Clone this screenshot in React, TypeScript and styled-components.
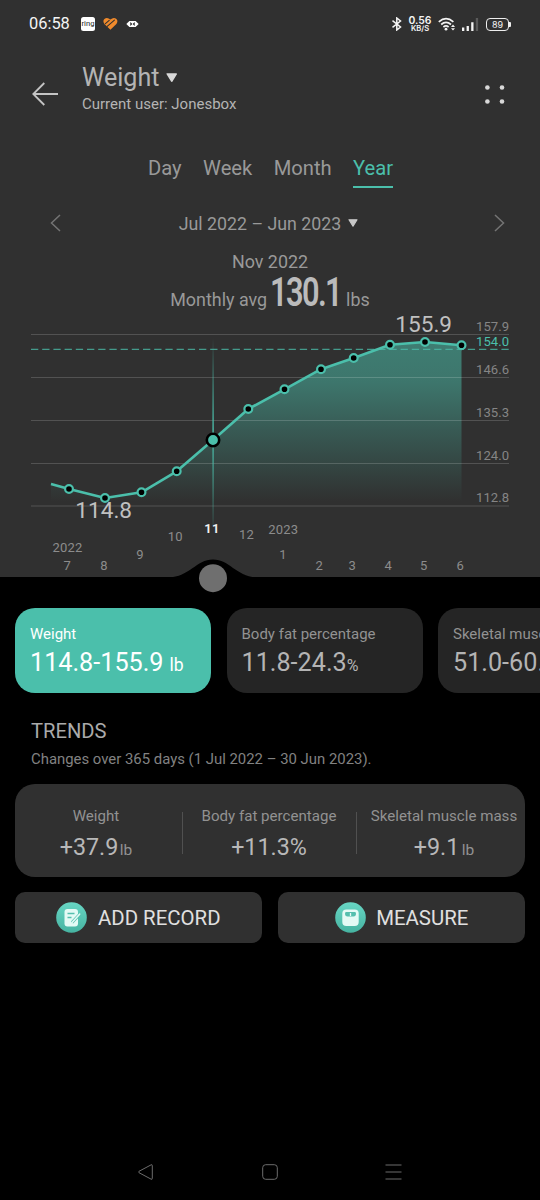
import React from 'react';
import styled, { createGlobalStyle } from 'styled-components';

const teal = '#4bbfab';
const panel = '#303030';

const GlobalStyle = createGlobalStyle`
  * { box-sizing: border-box; }
  html, body { margin: 0; background: #000; }
  body { font-family: Roboto, "Liberation Sans", sans-serif; color: #a9a9a9; }
`;

const Screen = styled.div`
  width: 540px;
  height: 1200px;
  overflow: hidden;
  display: flex;
  flex-direction: column;
  background: #000;
`;

const TopPanel = styled.section`
  height: 577px;
  flex: none;
  display: flex;
  flex-direction: column;
  background: ${panel};
`;

const StatusBar = styled.header`
  height: 48px;
  padding: 0 29px 0 29px;
  display: flex;
  align-items: center;
  justify-content: space-between;
  color: #f4f4f4;
`;

const StatusGroup = styled.div`
  display: flex;
  align-items: center;
`;

const Clock = styled.span`
  width: 52px;
  font: 400 16.4px/20px Roboto, sans-serif;
`;

const RingBadge = styled.span`
  width: 14px;
  height: 14px;
  margin-right: 8px;
  border-radius: 2.5px;
  background: #fff;
  color: #222;
  display: flex;
  justify-content: center;
  font: 400 7.6px/14px Roboto, sans-serif;
`;

const HexMark = styled.svg`
  margin-left: 8px;
`;

const Signal = styled.svg`
  margin: 0 7px 0 5px;
`;

const NetSpeed = styled.div`
  width: 24px;
  margin: 0 6px 0 5px;
  text-align: center;
  font: 600 10.4px/9px Inter, sans-serif;
`;

const NetUnit = styled.div`
  font-size: 7.6px;
  line-height: 8px;
`;

const Battery = styled.span`
  width: 23px;
  height: 13px;
  border: 1.4px solid #eee;
  border-radius: 4px;
  display: flex;
  justify-content: center;
  font: 400 9px/11.4px Inter, sans-serif;
`;

const BatteryTip = styled.span`
  width: 2px;
  height: 5px;
  background: #eee;
  border-radius: 0 1px 1px 0;
`;

const Header = styled.div`
  height: 92px;
  padding: 14px 35px 0 32px;
  display: flex;
`;

const HeaderIcon = styled.div`
  padding-top: 20px;
`;

const Titles = styled.div`
  flex: 1;
  margin-left: 24px;
`;

const Title = styled.h1`
  margin: 0;
  padding-top: 1px;
  display: flex;
  align-items: center;
  gap: 6.5px;
  font-weight: 400;
  font-size: 25.1px;
  line-height: 30px;
  color: #b4b4b4;
`;

const Subtitle = styled.div`
  font-size: 15px;
  line-height: 23px;
  color: #b4b4b4;
`;

const Tabs = styled.nav`
  height: 50px;
  padding-left: 148px;
  display: flex;
  align-items: flex-start;
  gap: 21.4px;
`;

const Tab = styled.span<{ $active?: boolean }>`
  height: 48px;
  padding-top: 14px;
  font-size: 20.2px;
  line-height: 28px;
  color: ${(p) => (p.$active ? teal : '#999')};
  border-bottom: 2px solid ${(p) => (p.$active ? teal : 'transparent')};
`;

const PeriodRow = styled.div`
  height: 66px;
  padding: 0 35px 0 50px;
  display: flex;
  align-items: center;
  justify-content: space-between;
`;

const Period = styled.div`
  margin-right: 18px;
  display: flex;
  align-items: center;
  gap: 7px;
  font-size: 17.8px;
  color: #999;
`;

const Selected = styled.div`
  height: 60px;
  display: flex;
  flex-direction: column;
  align-items: center;
  font-size: 17.9px;
  line-height: 22px;
  color: #999;
  margin-top: -5px;
`;

const Average = styled.div`
  display: flex;
  align-items: baseline;
  height: 38px;
  line-height: 39px;
`;

const BigNumber = styled.strong`
  width: 71px;
  margin: 0 5px 0 3px;
  font-size: 40.5px;
  font-weight: 600;
  letter-spacing: -2.1px;
  color: #bbb;
  white-space: nowrap;
  transform: scaleX(0.76);
  transform-origin: 0 50%;
`;

const Chart = styled.svg`
  display: block;
  flex: none;
  margin-top: auto;
  overflow: visible;
`;

const Metrics = styled.div`
  padding: 31px 0 0 15px;
  display: flex;
  gap: 15.5px;
`;

const Metric = styled.article<{ $active?: boolean }>`
  flex: 0 0 196px;
  height: 85px;
  padding: 15px 15px 0;
  border-radius: 20px;
  white-space: nowrap;
  background: ${(p) => (p.$active ? teal : '#252525')};
  color: ${(p) => (p.$active ? '#fff' : '#b4b4b4')};
`;

const MetricLabel = styled.div<{ $active?: boolean }>`
  font-size: 15px;
  line-height: 22px;
  color: ${(p) => (p.$active ? '#fff' : '#929292')};
`;

const MetricValue = styled.div`
  font-size: 25.2px;
  line-height: 36px;
`;

const Unit = styled.small<{ $size: number; $gap: number }>`
  font-size: ${(p) => p.$size}px;
  margin-left: ${(p) => p.$gap}px;
`;

const TrendsHead = styled.div`
  padding: 25px 31px 0;
  height: 91px;
`;

const TrendsTitle = styled.h2`
  margin: 0;
  font-weight: 400;
  font-size: 20.2px;
  line-height: 26px;
  color: #aaa;
`;

const TrendsNote = styled.div`
  font-size: 14.9px;
  line-height: 30px;
  color: #828282;
`;

const TrendCard = styled.div`
  height: 93px;
  margin: 0 15px;
  padding: 19px 0;
  display: grid;
  grid-template-columns: 167px 174px 1fr;
  border-radius: 20px;
  background: ${panel};
`;

const TrendCell = styled.div`
  display: flex;
  justify-content: center;
  height: 62px;
  & + & {
    background: linear-gradient(#505050, #505050) 0 9px / 1px 42px no-repeat;
  }
  &:first-child { padding-right: 5px; }
  &:last-child { padding-left: 7px; }
`;

const Trend = styled.div`
  text-align: center;
  white-space: nowrap;
`;

const TrendLabel = styled.div`
  font-size: 15.1px;
  line-height: 26px;
  color: #929292;
`;

const TrendValue = styled.div`
  font-size: 23.3px;
  line-height: 36px;
  color: #b8b8b8;
  small { color: #929292; }
`;

const Actions = styled.div`
  padding: 15px 15px 0;
  display: grid;
  grid-template-columns: 247px 247px;
  justify-content: space-between;
`;

const Action = styled.button`
  height: 51px;
  padding: 0;
  border: 0;
  border-radius: 10px;
  display: flex;
  align-items: center;
  justify-content: center;
  gap: 10.5px;
  background: ${panel};
  color: #e0e0e0;
  font: 400 20.4px/26px Roboto, sans-serif;
`;

const NavBar = styled.footer`
  margin-top: auto;
  height: 56px;
  padding: 0 138px 0 137px;
  display: flex;
  align-items: center;
  justify-content: space-between;
`;

const Caret = ({ w, c }: { w: number; c: string }) => (
  <svg width={w} height={w * 0.8} viewBox="0 0 10 8">
    <path d="M1 .8H9L5 7.2Z" fill={c} stroke={c} strokeWidth="1.2" strokeLinejoin="round" />
  </svg>
);

const points: [number, number][] = [
  [69, 489], [105, 498], [141.5, 492.3], [176.7, 471.3], [213, 440], [248.3, 409],
  [284.5, 389.3], [321, 369.2], [353.7, 358], [390, 344.7], [425, 342], [461.5, 345.3],
];
const line = 'M51 484L' + points.map((p) => p.join(' ')).join('L');
const gridRows: [number, string][] = [
  [334.5, '157.9'], [377.5, '146.6'], [420.5, '135.3'], [463.5, '124.0'], [506, '112.8'],
];
const months: [number, number, string][] = [
  [67.5, 552, '2022'], [67.3, 570, '7'], [104, 570, '8'], [140, 559, '9'], [175.3, 541, '10'],
  [246.5, 539.3, '12'], [283.3, 534, '2023'], [283, 559, '1'], [319.3, 570, '2'],
  [352.3, 570, '3'], [388.3, 570, '4'], [423.7, 570, '5'], [460.3, 570, '6'],
];

const WeightChart = () => (
  <Chart width="540" height="262" viewBox="0 315 540 262">
    <defs>
      <linearGradient id="area" gradientUnits="userSpaceOnUse" x1="0" y1="342" x2="0" y2="502">
        <stop offset="0" stopColor="#4bbfab" stopOpacity="0.54" />
        <stop offset="0.25" stopColor="#4bbfab" stopOpacity="0.49" />
        <stop offset="1" stopColor="#4bbfab" stopOpacity="0" />
      </linearGradient>
      <linearGradient id="cursor" gradientUnits="userSpaceOnUse" x1="0" y1="338" x2="0" y2="526">
        <stop offset="0" stopColor={teal} stopOpacity="0" />
        <stop offset="0.5" stopColor={teal} />
        <stop offset="1" stopColor={teal} stopOpacity="0.1" />
      </linearGradient>
    </defs>
    <path d={`${line}V506H51Z`} fill="url(#area)" />
    {gridRows.map(([y, label]) => (
      <g key={label}>
        <path d={`M31 ${y}H509`} stroke="#fff" strokeOpacity="0.17" />
        <text x="509" y={y - 4} textAnchor="end" fontSize="13.1" fill="#858585">{label}</text>
      </g>
    ))}
    <path d="M31 349.4H509" stroke={teal} strokeOpacity="0.75" strokeWidth="1.2" strokeDasharray="7.3 3.9" />
    <text x="509" y="346" textAnchor="end" fontSize="13.1" fill={teal}>154.0</text>
    <rect x="212.4" y="338" width="1.4" height="188" fill="url(#cursor)" />
    <path d={line} fill="none" stroke={teal} strokeWidth="2.6" strokeLinejoin="round" />
    {points.map(([x, y]) =>
      x === 213 ? (
        <circle key={x} cx={x} cy={y} r="6.2" fill={teal} stroke="#000" strokeWidth="2.6" />
      ) : (
        <circle key={x} cx={x} cy={y} r="3.9" fill="#000" stroke={teal} strokeWidth="2.2" />
      ),
    )}
    <g fontSize="22.6" fill="#c0c0c0" textAnchor="middle">
      <text x="103.7" y="518">114.8</text>
      <text x="423.7" y="332">155.9</text>
    </g>
    <g fontSize="13" fill="#8c8c8c" textAnchor="middle" letterSpacing="0.2">
      {months.map(([x, y, label]) => <text key={label} x={x} y={y}>{label}</text>)}
      <text x="212" y="532.6" fill="#f2f2f2" fontWeight="600">11</text>
    </g>
    <path d="M168 577.5C190 577 196 559.5 213 559.5S236 577 258 577.5Z" fill="#000" />
    <circle cx="213" cy="578.2" r="14" fill="#6f6f6f" />
  </Chart>
);

export default function App() {
  return (
    <Screen>
      <GlobalStyle />
      <TopPanel>
        <StatusBar>
          <StatusGroup>
            <Clock>06:58</Clock>
            <RingBadge>ring</RingBadge>
            <svg width="15" height="14" viewBox="0 0 15 14">
              <path d="M7.4 12.8L1.4 7Q-.6 4 1.4 1.9Q4.2 -.4 7.4 2.6Q10.6 -.4 13.4 1.9Q15.4 4 13.4 7Z" fill="#f08a2c" />
              <path d="M2.4 6.6L6.2 3.4M4.2 9.4L11.4 3.2" fill="none" stroke="#303030" strokeWidth="1.1" strokeLinecap="round" />
            </svg>
            <HexMark width="13" height="8" viewBox="0 0 13 8">
              <path d="M3.6 1.2L.8 4L3.6 6.8M9.4 1.2L12.2 4L9.4 6.8" fill="#fff" stroke="#fff" />
              <rect x="3" y="1" width="7" height="6" rx="1" fill="#fff" />
              <path d="M4.3 2V6L6.3 4ZM8.7 2V6L6.7 4Z" fill="#222" />
            </HexMark>
          </StatusGroup>
          <StatusGroup>
            <svg width="12" height="14" viewBox="0 0 12 14">
              <path d="M1.5 3.7L9.5 10L5.8 13V1L9.5 4L1.5 10.3" fill="none" stroke="#f4f4f4" strokeWidth="1.5" />
            </svg>
            <NetSpeed>0.56<NetUnit>KB/S</NetUnit></NetSpeed>
            <svg width="18" height="14" viewBox="0 0 18 14">
              <g fill="none" stroke="#f4f4f4" strokeWidth="1.7">
                <path d="M.8 4.8Q8 -1.6 15.4 4.8M3.2 7.5Q8 3.2 13 7.5M5.4 10Q8 7.8 10.6 10" />
              </g>
              <circle cx="8" cy="12.2" r="1.4" fill="#f4f4f4" />
              <path d="M13 10L15 7.6L17 10ZM13 11.2L15 13.6L17 11.2Z" fill="#f4f4f4" />
            </svg>
            <Signal width="18" height="13" viewBox="0 0 18 13">
              <path d="M1 9.6h2.3v3.4H1zM5.6 8h2.3v5H5.6zM10.2 4.3h2.3V13h-2.3z" fill="#f4f4f4" />
              <path d="M14.8 0h2.3v13h-2.3z" fill="#5a5a5a" />
            </Signal>
            <Battery>89</Battery>
            <BatteryTip />
          </StatusGroup>
        </StatusBar>
        <Header>
          <HeaderIcon>
            <svg width="26" height="24" viewBox="0 0 26 24">
              <path d="M12.3 1L1.3 12L12.3 23M1.3 12H26" fill="none" stroke="#c4c4c4" strokeWidth="1.8" />
            </svg>
          </HeaderIcon>
          <Titles>
            <Title>Weight <Caret w={11.5} c="#d8d8d8" /></Title>
            <Subtitle>Current user: Jonesbox</Subtitle>
          </Titles>
          <HeaderIcon>
            <svg width="20" height="24" viewBox="0 0 20 24">
              <g fill="#d8d8d8">
                <circle cx="2.4" cy="5.5" r="2.3" />
                <circle cx="17" cy="5.5" r="2.3" />
                <circle cx="2.4" cy="19.5" r="2.3" />
                <circle cx="17" cy="19.5" r="2.3" />
              </g>
            </svg>
          </HeaderIcon>
        </Header>
        <Tabs>
          <Tab>Day</Tab>
          <Tab>Week</Tab>
          <Tab>Month</Tab>
          <Tab $active>Year</Tab>
        </Tabs>
        <PeriodRow>
          <svg width="11" height="18" viewBox="0 0 11 18">
            <path d="M10 1L1.5 9L10 17" fill="none" stroke="#747474" strokeWidth="1.5" />
          </svg>
          <Period>Jul 2022 – Jun 2023 <Caret w={10} c="#c8c8c8" /></Period>
          <svg width="11" height="18" viewBox="0 0 11 18">
            <path d="M1 1L9.5 9L1 17" fill="none" stroke="#747474" strokeWidth="1.5" />
          </svg>
        </PeriodRow>
        <Selected>
          Nov 2022
          <Average>Monthly avg <BigNumber>130.1</BigNumber> lbs</Average>
        </Selected>
        <WeightChart />
      </TopPanel>
      <Metrics>
        <Metric $active>
          <MetricLabel $active>Weight</MetricLabel>
          <MetricValue>114.8-155.9<Unit $size={17.6} $gap={6}>lb</Unit></MetricValue>
        </Metric>
        <Metric>
          <MetricLabel>Body fat percentage</MetricLabel>
          <MetricValue>11.8-24.3<Unit $size={16} $gap={0}>%</Unit></MetricValue>
        </Metric>
        <Metric>
          <MetricLabel>Skeletal muscle mass</MetricLabel>
          <MetricValue>51.0-60.1<Unit $size={17.6} $gap={6}>lb</Unit></MetricValue>
        </Metric>
      </Metrics>
      <TrendsHead>
        <TrendsTitle>TRENDS</TrendsTitle>
        <TrendsNote>Changes over 365 days (1 Jul 2022 – 30 Jun 2023).</TrendsNote>
      </TrendsHead>
      <TrendCard>
        <TrendCell>
          <Trend>
            <TrendLabel>Weight</TrendLabel>
            <TrendValue>+37.9<Unit $size={15.5} $gap={1.5}>lb</Unit></TrendValue>
          </Trend>
        </TrendCell>
        <TrendCell>
          <Trend>
            <TrendLabel>Body fat percentage</TrendLabel>
            <TrendValue>+11.3%</TrendValue>
          </Trend>
        </TrendCell>
        <TrendCell>
          <Trend>
            <TrendLabel>Skeletal muscle mass</TrendLabel>
            <TrendValue>+9.1<Unit $size={15.5} $gap={2.5}>lb</Unit></TrendValue>
          </Trend>
        </TrendCell>
      </TrendCard>
      <Actions>
        <Action>
          <svg width="31" height="31" viewBox="0 0 31 31">
            <defs>
              <linearGradient id="disc" x1="0" y1="0" x2="0" y2="1">
                <stop offset="0" stopColor="#68d6c4" />
                <stop offset="1" stopColor="#46b3a1" />
              </linearGradient>
            </defs>
            <circle cx="15.5" cy="15.5" r="15.3" fill="url(#disc)" />
            <rect x="8.5" y="7" width="13.5" height="17.5" rx="3" fill="#e4faf5" />
            <path d="M11.5 11.5H18.5M11.5 15.5H15.5" stroke="#55bfae" strokeWidth="1.4" />
            <path d="M16 20.5L24 12" stroke="#55bfae" strokeWidth="3" />
            <path d="M16.3 20.2L23.6 12.2" stroke="#e4faf5" strokeWidth="1.7" strokeLinecap="round" />
          </svg>
          ADD RECORD
        </Action>
        <Action>
          <svg width="31" height="31" viewBox="0 0 31 31">
            <circle cx="15.5" cy="15.5" r="15.3" fill="url(#disc)" />
            <rect x="7.3" y="7.5" width="16.4" height="16.5" rx="4" fill="#e4faf5" />
            <path d="M11 10H20Q21 10 21 11.5Q21 14.5 18.5 14.5H12.5Q10 14.5 10 11.5Q10 10 11 10Z" fill="#55bfae" />
            <path d="M15.5 11V14" stroke="#e4faf5" strokeWidth="1.3" />
          </svg>
          MEASURE
        </Action>
      </Actions>
      <NavBar>
        <svg width="17" height="18" viewBox="0 0 17 18">
          <path d="M15.3 2.6V15.4Q15.3 16.8 14 16.1L2 9.7Q1 9 2 8.3L14 1.9Q15.3 1.2 15.3 2.6Z" fill="none" stroke="#6c6c6c" />
        </svg>
        <svg width="16" height="16" viewBox="0 0 16 16">
          <rect x="0.7" y="0.7" width="14.6" height="14.6" rx="3" fill="none" stroke="#6c6c6c" />
        </svg>
        <svg width="17" height="16" viewBox="0 0 17 16">
          <path d="M.5 1H16.5M.5 8H16.5M.5 15H16.5" stroke="#6c6c6c" strokeWidth="1.2" />
        </svg>
      </NavBar>
    </Screen>
  );
}
